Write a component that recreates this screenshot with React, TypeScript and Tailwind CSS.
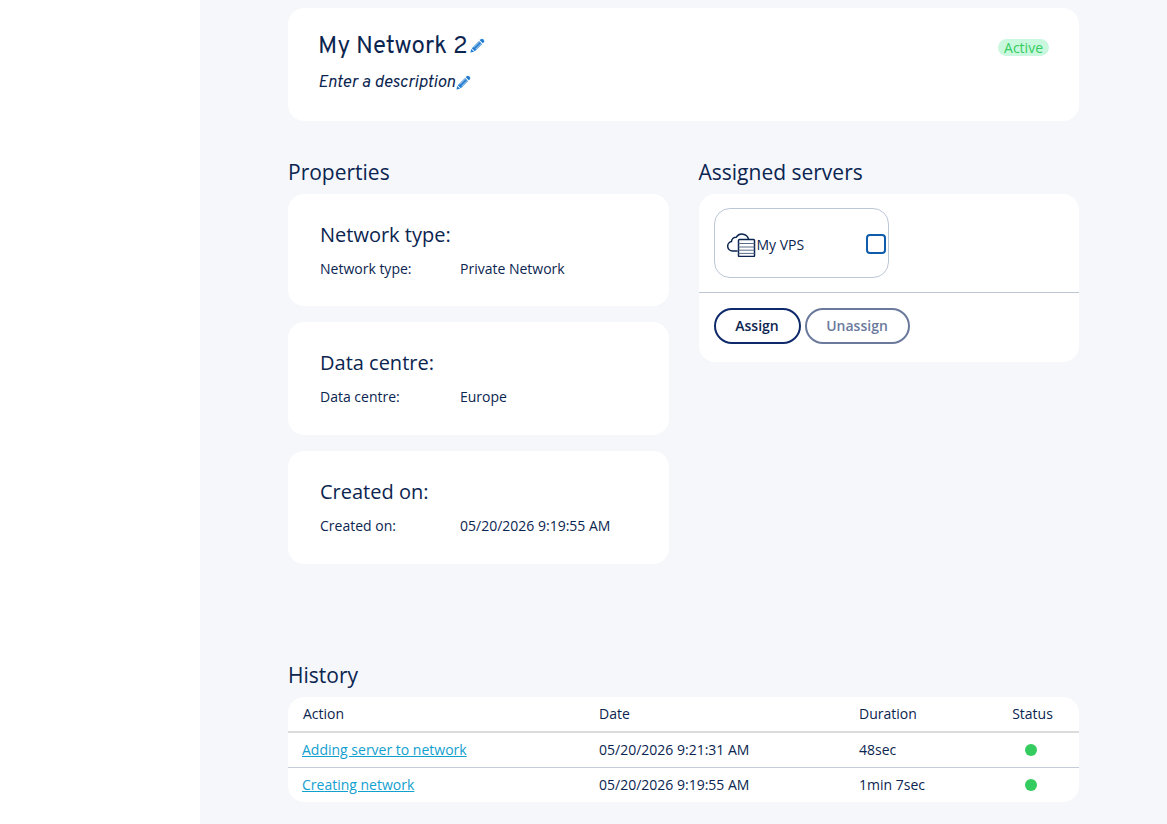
const NAVY = "text-[#0b2550]";

function Pencil({ className }: { className?: string }) {
  return (
    <svg viewBox="0 0 16 16" className={className} fill="#1f7ad0">
      <path d="M11.6 1.2a1.5 1.5 0 0 1 2.1 0l1.1 1.1a1.5 1.5 0 0 1 0 2.1l-1.2 1.2-3.2-3.2z" />
      <path d="M9.7 3.1l3.2 3.2-7.8 7.8-3.2-3.2z" />
      <path d="M1.3 11.6l3.1 3.1-3.9.8z" />
      <path d="M4 10.2l6.6-6.6M5.8 12l6.6-6.6" stroke="#fff" strokeWidth="0.7" fill="none" />
    </svg>
  );
}

function ServerCloud() {
  return (
    <svg viewBox="0 0 30 26" className="w-[30px] h-[26px] shrink-0" fill="none" stroke="#0b2550" strokeWidth="1.5">
      <path d="M11 20H6.5a4.8 4.8 0 0 1-1-9.5 4.6 4.6 0 0 1 4.8-4.3A6.8 6.8 0 0 1 22.5 8" strokeLinecap="round" />
      <rect x="12.5" y="8.5" width="16" height="17" rx="1" fill="#fff" />
      <path d="M12.5 12.5h16M12.5 16h16M12.5 19.2h16M12.5 22.4h16" strokeWidth="1" stroke="#5a6c8a" />
    </svg>
  );
}

function InfoCard({ label, value, height }: { label: string; value: string; height: string }) {
  return (
    <div className={`bg-white rounded-2xl pl-8 pt-[26px] ${height}`}>
      <h3 className="text-[20px] leading-[30px]">{label}</h3>
      <div className="flex mt-[9px] text-[14px] leading-[20px]">
        <span className="w-[140px]">{label}</span>
        <span>{value}</span>
      </div>
    </div>
  );
}

const HISTORY = [
  { action: "Adding server to network", date: "05/20/2026 9:21:31 AM", duration: "48sec" },
  { action: "Creating network", date: "05/20/2026 9:19:55 AM", duration: "1min 7sec" },
];

export default function App() {
  return (
    <div className={`flex h-[824px] overflow-hidden bg-white font-['Open_Sans',sans-serif] ${NAVY}`}>
      <aside className="w-[200px] shrink-0 bg-white" />
      <main className="flex-1 bg-[#f5f7fb] pl-[88px] pr-[88px] pt-2">
        <section className="bg-white rounded-2xl h-[113px] pl-[30px] pr-[30px] pt-5 flex justify-between items-start">
          <div>
            <div className="flex items-center gap-[2px] h-[35px] pt-[3px] font-['Overpass','Lato',sans-serif] text-[24px] tracking-[0.1px]">
              <span>My Network 2</span>
              <Pencil className="w-[15px] h-[15px] -mt-[3px]" />
            </div>
            <div className="flex items-center gap-[1px] mt-[7px] h-[27px] font-['Overpass','Lato',sans-serif] italic text-[17px]">
              <span>Enter a description</span>
              <Pencil className="w-[15px] h-[15px] -mt-[3px]" />
            </div>
          </div>
          <span className="mt-[11px] h-[17px] leading-[17px] rounded-full bg-[#c9f8de] px-[6px] text-[14px] text-[#35cc5f]">
            Active
          </span>
        </section>

        <div className="grid grid-cols-2 gap-[30px] mt-[34px]">
          <div>
            <h2 className="text-[21px] leading-[34px] mb-[5px]">Properties</h2>
            <div className="flex flex-col gap-4">
              <InfoCard label="Network type:" value="Private Network" height="h-[112px]" />
              <InfoCard label="Data centre:" value="Europe" height="h-[113px]" />
              <InfoCard label="Created on:" value="05/20/2026 9:19:55 AM" height="h-[113px]" />
            </div>
          </div>
          <div>
            <h2 className="text-[21px] leading-[34px] mb-[5px]">Assigned servers</h2>
            <div className="bg-white rounded-2xl h-[168px]">
              <div className="h-[99px] border-b border-[#bcc7d6] pl-[15px] pt-[14px]">
                <div className="w-[175px] h-[70px] border border-[#bcc7d6] rounded-2xl flex items-center pl-[11px] pr-[2px] pt-[1px]">
                  <ServerCloud />
                  <span className="text-[14px] ml-[1px] mt-[1px]">My VPS</span>
                  <span className="ml-auto w-5 h-5 rounded-[4px] border-2 border-[#0f5cad]" />
                </div>
              </div>
              <div className="flex gap-1 pl-[15px] pt-[15px]">
                <button className="h-[36px] w-[87px] pb-[1px] rounded-full border-2 border-[#0f2a6b] text-[14px] font-semibold text-[#0b2550]">
                  Assign
                </button>
                <button className="h-[36px] w-[105px] pb-[1px] rounded-full border-2 border-[#6b7a9c] text-[14px] font-semibold text-[#6b7a9c]">
                  Unassign
                </button>
              </div>
            </div>
          </div>
        </div>

        <h2 className="text-[21px] leading-[34px] mt-[94px] mb-[5px]">History</h2>
        <table className="w-full bg-white rounded-2xl text-[14px] table-fixed border-separate border-spacing-0">
          <thead>
            <tr className="h-[36px]">
              <th className="w-[296px] pl-[15px] pb-[2px] text-left font-normal border-b-2 border-[#dcdcdc]">Action</th>
              <th className="w-[260px] pl-[15px] pb-[2px] text-left font-normal border-b-2 border-[#dcdcdc]">Date</th>
              <th className="w-[150px] pl-[15px] pb-[2px] text-left font-normal border-b-2 border-[#dcdcdc]">Duration</th>
              <th className="pr-[8px] pb-[2px] text-center font-normal border-b-2 border-[#dcdcdc]">Status</th>
            </tr>
          </thead>
          <tbody>
            {HISTORY.map((row, i) => (
              <tr key={row.action} className={i === 0 ? "h-[35px]" : "h-[34px]"}>
                <td className={`pl-[14px] pb-[2px] ${i === 0 ? "border-b border-[#c3ccd8]" : ""}`}>
                  <a href="#" className="text-[#12a0cf] underline">{row.action}</a>
                </td>
                <td className={`pl-[15px] pb-[2px] ${i === 0 ? "border-b border-[#c3ccd8]" : ""}`}>{row.date}</td>
                <td className={`pl-[15px] pb-[2px] ${i === 0 ? "border-b border-[#c3ccd8]" : ""}`}>{row.duration}</td>
                <td className={`pr-[12px] ${i === 0 ? "border-b border-[#c3ccd8]" : ""}`}>
                  <span className="block mx-auto w-3 h-3 rounded-full bg-[#35cc5f]" />
                </td>
              </tr>
            ))}
          </tbody>
        </table>
      </main>
    </div>
  );
}
